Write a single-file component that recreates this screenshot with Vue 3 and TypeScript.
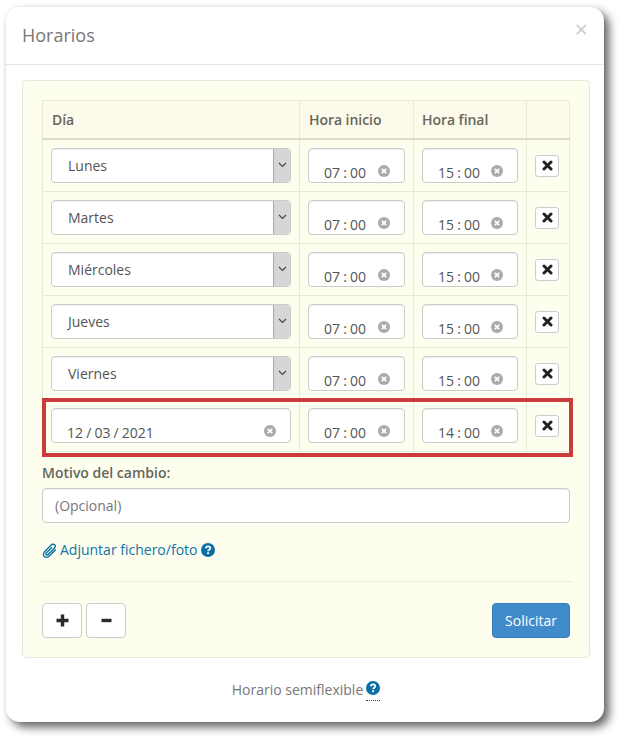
<script setup lang="ts">
interface Row { day?: string; date?: string; start: string; end: string }
const rows: Row[] = [
  { day: 'Lunes', start: '07 : 00', end: '15 : 00' },
  { day: 'Martes', start: '07 : 00', end: '15 : 00' },
  { day: 'Miércoles', start: '07 : 00', end: '15 : 00' },
  { day: 'Jueves', start: '07 : 00', end: '15 : 00' },
  { day: 'Viernes', start: '07 : 00', end: '15 : 00' },
  { date: '12 / 03 / 2021', start: '07 : 00', end: '14 : 00' },
]
</script>

<template>
  <div class="page">
    <section class="modal">
      <header class="modal-head">
        <h4>Horarios</h4>
        <span class="close">×</span>
      </header>
      <div class="modal-body">
        <div class="panel">
          <div class="table-wrap">
            <table>
              <colgroup>
                <col class="c1" /><col class="c2" /><col class="c3" /><col class="c4" />
              </colgroup>
              <thead>
                <tr><th>Día</th><th>Hora inicio</th><th class="th-final">Hora final</th><th></th></tr>
              </thead>
              <tbody>
                <tr v-for="(r, i) in rows" :key="i">
                  <td>
                    <div v-if="r.day" class="select">
                      <span class="select-text">{{ r.day }}</span>
                      <span class="select-arrow">
                        <svg width="9" height="6" viewBox="0 0 9 6"><path d="M1 1l3.500 3.500L8 1" fill="none" stroke="#444" stroke-width="1.100" /></svg>
                      </span>
                    </div>
                    <div v-else class="field date">
                      <span class="val">{{ r.date }}</span>
                      <svg class="clear" viewBox="0 0 12 12"><circle cx="6" cy="6" r="6" fill="#aaa" /><path d="M3.800 3.800l4.400 4.400M8.200 3.800L3.800 8.200" stroke="#fff" stroke-width="1.700" /></svg>
                    </div>
                  </td>
                  <td>
                    <div class="field">
                      <span class="val">{{ r.start }}</span>
                      <svg class="clear" viewBox="0 0 12 12"><circle cx="6" cy="6" r="6" fill="#aaa" /><path d="M3.800 3.800l4.400 4.400M8.200 3.800L3.800 8.200" stroke="#fff" stroke-width="1.700" /></svg>
                    </div>
                  </td>
                  <td>
                    <div class="field">
                      <span class="val">{{ r.end }}</span>
                      <svg class="clear" viewBox="0 0 12 12"><circle cx="6" cy="6" r="6" fill="#aaa" /><path d="M3.800 3.800l4.400 4.400M8.200 3.800L3.800 8.200" stroke="#fff" stroke-width="1.700" /></svg>
                    </div>
                  </td>
                  <td class="del-cell">
                    <button class="del" type="button">
                      <svg width="11" height="11" viewBox="0 0 11 11"><path d="M2 2l7 7M9 2l-7 7" stroke="#222" stroke-width="3" stroke-linecap="round" /></svg>
                    </button>
                  </td>
                </tr>
              </tbody>
            </table>
            <div class="highlight"></div>
          </div>

          <label class="lbl">Motivo del cambio:</label>
          <div class="text-input">(Opcional)</div>

          <div class="attach">
            <svg class="clip" width="15" height="15" viewBox="0 0 15 15"><path d="M13.800 6.400L7.300 12.900c-1.700 1.700-3.900 1.800-5.100.6C1 12.300 1.100 10.100 2.800 8.400L8.900 2.200c1.200-1.200 2.800-1.300 3.700-.4.900.9.800 2.500-.4 3.700L6.100 11.400c-.6.600-1.400.8-1.900.3-.5-.5-.3-1.300.3-1.900L10 4.300" fill="none" stroke="#0a75a8" stroke-width="1.400" /></svg>
            <a class="link">Adjuntar fichero/foto</a>
            <svg class="help" width="14" height="14" viewBox="0 0 14 14"><circle cx="7" cy="7" r="7" fill="#0a6fa5" /><path d="M4.800 5.300C5 4 6 3.400 7.100 3.400c1.300 0 2.200.8 2.200 1.800 0 1.500-2.200 1.600-2.200 3" fill="none" stroke="#fff" stroke-width="1.700" /><rect x="6.100" y="9.300" width="2" height="1.800" fill="#fff" /></svg>
          </div>

          <hr />

          <div class="actions">
            <button class="btn" type="button">
              <svg width="15" height="15" viewBox="0 0 15 15"><path d="M7.500 1.500v12M1.500 7.500h12" stroke="#2b2b2b" stroke-width="3.400" /></svg>
            </button>
            <button class="btn" type="button">
              <svg width="13" height="15" viewBox="0 0 13 15"><path d="M1.500 7.500h10" stroke="#2b2b2b" stroke-width="3.400" /></svg>
            </button>
            <button class="submit" type="button">Solicitar</button>
          </div>
        </div>
        <footer class="foot">
          <span>Horario semiflexible</span>
          <span class="foot-help">
            <svg width="14" height="14" viewBox="0 0 14 14"><circle cx="7" cy="7" r="7" fill="#0a6fa5" /><path d="M4.800 5.300C5 4 6 3.400 7.100 3.400c1.300 0 2.200.8 2.200 1.800 0 1.500-2.200 1.600-2.200 3" fill="none" stroke="#fff" stroke-width="1.700" /><rect x="6.100" y="9.300" width="2" height="1.800" fill="#fff" /></svg>
          </span>
        </footer>
      </div>
    </section>
  </div>
</template>

<style scoped>
.page {
  width: 627px;
  height: 745px;
  box-sizing: border-box;
  padding: 7px 23px 0 6px;
  background: #fff;
  font-family: "Open Sans", sans-serif;
  font-size: 14px;
  line-height: 20px;
  color: #555;
  overflow: hidden;
}
.modal {
  height: 715px;
  box-sizing: border-box;
  background: #fff;
  border-radius: 14px;
  box-shadow: 5px 5px 10px rgba(0, 0, 0, 0.62), -1px -1px 3px rgba(0, 0, 0, 0.03);
}
.modal-head {
  height: 58px;
  box-sizing: border-box;
  border-bottom: 1px solid #e5e5e5;
  padding: 0 16px;
  display: flex;
  align-items: center;
  justify-content: space-between;
}
h4 {
  margin: -2px 0 0;
  font-size: 18px;
  font-weight: 400;
  color: #777;
  line-height: 56px;
}
.close {
  font-size: 23px;
  font-weight: 400;
  color: #ccc;
  line-height: 1;
  margin-top: -13px;
}
.modal-body { padding: 15px 14px 0 16px; }
.panel {
  height: 578px;
  box-sizing: border-box;
  padding: 19px;
  background: #fefeee;
  border: 1px solid #e8e8dc;
  border-radius: 4px;
}
.table-wrap { position: relative; }
table {
  table-layout: fixed;
  border-collapse: collapse;
  width: 527px;
}
.c1 { width: 257px; }
.c2 { width: 114px; }
.c3 { width: 113px; }
.c4 { width: 43px; }
th, td {
  border: 1px solid #e9e9d8;
  padding: 8px;
  text-align: left;
  vertical-align: top;
}
th {
  height: 20px;
  font-weight: 600;
  color: #66665c;
  background: #fcfaea;
  border-bottom: 2px solid #dcdccd;
  padding: 9px 8px 8px 9px;
  letter-spacing: -0.05px;
}
th.th-final { padding-left: 8px; }
td { height: 35px; }
.select {
  display: flex;
  height: 35px;
  box-sizing: border-box;
  background: #fff;
  border: 1px solid #ccc;
  border-radius: 4px;
  box-shadow: inset 0 1px 1px rgba(0, 0, 0, 0.075);
  overflow: hidden;
}
.select-text { flex: 1; padding: 7px 16px 5px; }
.select-arrow {
  width: 16px;
  background: #d6d6d6;
  border-left: 1px solid #aaa;
  display: flex;
  align-items: center;
  justify-content: center;
  padding-bottom: 2px;
  box-sizing: content-box;
  border-radius: 0 4px 4px 0;
}
.field {
  display: flex;
  height: 35px;
  box-sizing: border-box;
  background: #fff;
  border: 1px solid #ccc;
  border-radius: 4px;
  box-shadow: inset 0 1px 1px rgba(0, 0, 0, 0.075);
  padding: 13px 14px 0 15px;
  justify-content: space-between;
}
.val { line-height: 20px; margin-top: 1px; white-space: nowrap; font-size: 14px; word-spacing: -0.5px; }
.clear { width: 12px; height: 12px; margin-top: 3px; }
.del-cell { padding: 0; vertical-align: middle; }
.del {
  display: flex;
  align-items: center;
  justify-content: center;
  width: 24px;
  height: 22px;
  margin-left: 8px;
  padding: 0;
  background: #fff;
  border: 1px solid #ccc;
  border-radius: 3px;
}
.highlight {
  position: absolute;
  left: 0;
  top: 298px;
  width: 531px;
  height: 59px;
  box-sizing: border-box;
  border: 4px solid #cc3a3a;
  pointer-events: none;
}
.lbl {
  display: block;
  margin-top: 11px;
  margin-bottom: 5px;
  font-weight: 600;
  color: #66665c;
}
.text-input {
  height: 35px;
  width: 528px;
  box-sizing: border-box;
  padding: 7px 12px;
  background: #fff;
  border: 1px solid #ccc;
  border-radius: 4px;
  color: #777;
  box-shadow: inset 0 1px 1px rgba(0, 0, 0, 0.075);
}
.attach {
  display: flex;
  align-items: center;
  margin-top: 17px;
  height: 20px;
}
.clip { margin-right: 3px; }
.link { color: #0a75a8; }
.help { margin-left: 4px; }
hr {
  border: 0;
  border-top: 1px solid #eeeedf;
  margin: 21px -3px 21px -2px;
}
.actions { display: flex; gap: 4px; width: 528px; }
.btn {
  width: 40px;
  height: 35px;
  padding: 0;
  display: flex;
  align-items: center;
  justify-content: center;
  background: #fff;
  border: 1px solid #ccc;
  border-radius: 4px;
}
.submit {
  margin-left: auto;
  width: 78px;
  height: 35px;
  padding: 0;
  background: #428bca;
  border: 1px solid #357ebd;
  border-radius: 4px;
  color: #fff;
  font: 400 14px/20px "Open Sans", sans-serif;
}
.foot {
  display: flex;
  justify-content: center;
  align-items: center;
  gap: 3px;
  margin-top: 22px;
  height: 20px;
  color: #777;
}
.foot-help {
  display: flex;
  height: 19px;
  margin-top: 1px;
  border-bottom: 1px dotted #0a4f75;
}
</style>

<style>
html, body { margin: 0; background: #fff; }
</style>
